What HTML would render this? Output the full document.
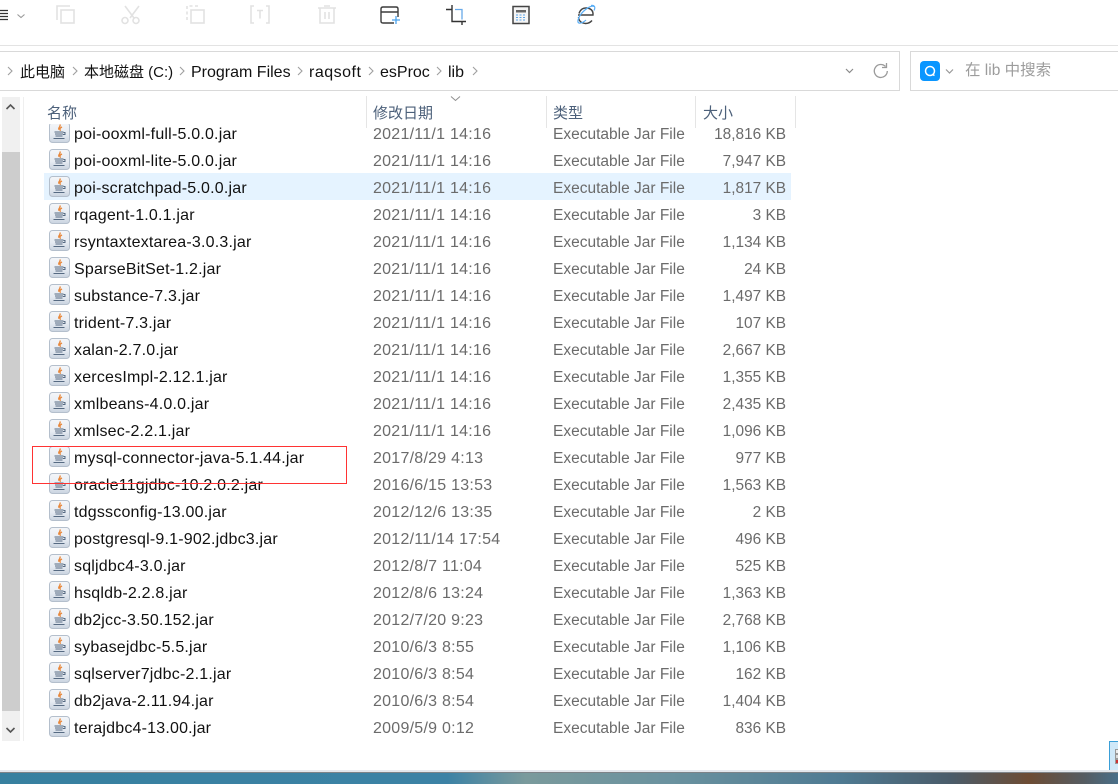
<!DOCTYPE html>
<html lang="zh"><head><meta charset="utf-8"><title>lib</title>
<style>
*{box-sizing:border-box}
html,body{margin:0;padding:0;background:#fff}
body{width:1118px;height:784px;position:relative;overflow:hidden;font-family:"Liberation Sans","Noto Sans CJK SC",sans-serif}
.a{position:absolute}
.t{position:absolute;white-space:nowrap;line-height:20px}
#rows{position:absolute;left:0;top:119px;width:800px}
.r{position:relative;height:27px;width:800px}
.r svg{position:absolute;left:49px;top:3px;width:21px;height:21px}
.r span{position:absolute;top:5px;line-height:21px;white-space:nowrap}
.n{left:74px;font-size:16px;letter-spacing:.2px;color:#111}
.d{left:373px;font-size:16px;letter-spacing:.25px;color:#6b6b6b}
.y{left:553px;font-size:15.5px;color:#6b6b6b}
.s{right:14px;font-size:15.4px;color:#6b6b6b}
.h{left:44px;width:747px;background:#e5f3ff;position:absolute;top:0;height:27px}
.sep{position:absolute;top:96px;height:32px;width:1px;background:#e5e5e5}
.hd{position:absolute;top:104px;font-size:15px;line-height:20px;color:#4c607a;white-space:nowrap}
.bc{position:absolute;top:63px;font-size:16px;line-height:20px;color:#111;white-space:nowrap}
.ch{position:absolute;top:66px;width:6px;height:10px}
</style></head><body>
<svg width="0" height="0" style="position:absolute"><defs>
<linearGradient id="g" x1="0" y1="0" x2="0" y2="1"><stop offset="0" stop-color="#f4f6f9"/><stop offset=".6" stop-color="#e6ebf2"/><stop offset="1" stop-color="#c9d3df"/></linearGradient>
<symbol id="j" viewBox="0 0 21 21">
<rect x=".5" y=".5" width="20" height="20" rx="3" fill="url(#g)" stroke="#b4bfcc"/>
<path d="M10.800 2.500c1.600 2-2.200 3-.8 5.200M13 5c-2 1-2.800 2-1.400 3.700" fill="none" stroke="#e8873a" stroke-width="1.300"/>
<path d="M5.500 10h9M6 12h8M6.500 14h7" stroke="#566a82" stroke-width="1.100" fill="none"/>
<path d="M14.500 10.500h1.500v2h-2M4.500 16.500h11" stroke="#566a82" stroke-width="1" fill="none"/>
</symbol></defs></svg>

<!-- toolbar -->
<svg class="a" style="left:0;top:0" width="620" height="44" fill="none">
<path d="M0 10.500h8M0 13.500h8M0 16.500h8M0 19.500h8" stroke="#333" stroke-width="1.200"/>
<path d="M17.500 14.500l3.500 3 3.500-3" stroke="#999" stroke-width="1.100"/>
<g stroke="#e2e2e2" stroke-width="1.600">
<path d="M57 20V6h13"/><rect x="61" y="10" width="13" height="13"/>
<path d="M125 6l9 12M139 6l-9 12"/><circle cx="125" cy="20.500" r="3"/><circle cx="136" cy="20.500" r="3"/>
<path d="M187 20V6h13" stroke-dasharray="3 2.500"/><rect x="191" y="10" width="13" height="13"/>
<path d="M254 6h-3v17h3M266 6h3v17h-3M257 10.500h6M260 10.500v8"/>
<path d="M318 8h18M324 6h6M320 8v15h14V8M325 12v7M329 12v7"/>
</g>
<path d="M394 23h-11q-2 0-2-2V9q0-2 2-2h13q2 0 2 2v8M381 12h17" stroke="#3c3c3c" stroke-width="1.400"/>
<path d="M392 20h8M396 16v8" stroke="#4ba3ee" stroke-width="1.300"/>
<path d="M446 9.500h6M452 5V21.500h14M462 25v-3.500" stroke="#333" stroke-width="1.400"/>
<path d="M455 9.500h7v10" stroke="#67a9e8" stroke-width="1.300"/>
<rect x="513" y="6.500" width="16" height="17" fill="#f5f5f5" stroke="#444" stroke-width="1.500"/>
<rect x="516" y="10" width="10" height="2.500" fill="#666"/>
<path d="M516 15h10M516 17.500h10M516 20h10" stroke="#5aa4e6" stroke-width="1.100" stroke-dasharray="2 1.500"/>
<path d="M578 15h15q.5-6-6-7-6-.5-8 5.500M578.500 17q.5 6 7 6.500 4 0 6.500-3" stroke="#444" stroke-width="1.400"/>
<path d="M594 6.500c-3-1.500-10 3-14 9-2 3-3 7-1 7.500 2 .5 5-1 7-3M591 5.500c3-.5 5 1 3 5" stroke="#59aef6" stroke-width="1.200"/>
</svg>

<div class="a" style="left:0;top:45px;width:1118px;height:1px;background:#e3e3e3"></div>

<!-- address bar -->
<div class="a" style="left:-2px;top:51px;width:902px;height:40px;border:1px solid #d9d9d9;background:#fff"></div>
<div class="a" style="left:910px;top:51px;width:212px;height:40px;border:1px solid #d9d9d9;background:#fff"></div>

<svg class="ch" style="left:7px" viewBox="0 0 6 10" fill="none"><path d="M1 1l4 4-4 4" stroke="#a0a0a0" stroke-width="1.100"/></svg>
<div class="bc" style="left:20px;font-size:15px">此电脑</div>
<svg class="ch" style="left:72px" viewBox="0 0 6 10" fill="none"><path d="M1 1l4 4-4 4" stroke="#a0a0a0" stroke-width="1.100"/></svg>
<div class="bc" style="left:84px;font-size:15px">本地磁盘 (C:)</div>
<svg class="ch" style="left:179px" viewBox="0 0 6 10" fill="none"><path d="M1 1l4 4-4 4" stroke="#a0a0a0" stroke-width="1.100"/></svg>
<div class="bc" style="left:191px">Program Files</div>
<svg class="ch" style="left:297px" viewBox="0 0 6 10" fill="none"><path d="M1 1l4 4-4 4" stroke="#a0a0a0" stroke-width="1.100"/></svg>
<div class="bc" style="left:309px;letter-spacing:.5px">raqsoft</div>
<svg class="ch" style="left:368px" viewBox="0 0 6 10" fill="none"><path d="M1 1l4 4-4 4" stroke="#a0a0a0" stroke-width="1.100"/></svg>
<div class="bc" style="left:380px">esProc</div>
<svg class="ch" style="left:436px" viewBox="0 0 6 10" fill="none"><path d="M1 1l4 4-4 4" stroke="#a0a0a0" stroke-width="1.100"/></svg>
<div class="bc" style="left:448px">lib</div>
<svg class="ch" style="left:472px" viewBox="0 0 6 10" fill="none"><path d="M1 1l4 4-4 4" stroke="#a0a0a0" stroke-width="1.100"/></svg>

<svg class="a" style="left:840px;top:60px" width="60" height="24" fill="none">
<path d="M6 9l3.500 3.500L13 9" stroke="#8a8a8a" stroke-width="1.200"/>
<path d="M45.500 6.500a6.500 6.500 0 1 0 1.800 4.500" stroke="#9a9a9a" stroke-width="1.300"/>
<path d="M46.500 3v4.500H42" stroke="#9a9a9a" stroke-width="1.300"/>
</svg>

<!-- search -->
<svg class="a" style="left:920px;top:61px" width="40" height="20" fill="none">
<rect width="20" height="20" rx="4" fill="#0a96ff"/>
<circle cx="10" cy="10" r="4.500" stroke="#fff" stroke-width="1.500"/><path d="M12.500 13.500l2 1" stroke="#fff" stroke-width="1.500"/>
<path d="M26 8.500l3.500 3.500L33 8.500" stroke="#999" stroke-width="1.200"/>
</svg>
<div class="t" style="left:965px;top:61px;font-size:15.500px;color:#9c9c9c">在 lib 中搜索</div>

<!-- scrollbar -->
<div class="a" style="left:2px;top:97px;width:18px;height:644px;background:#f0f0f0"></div>
<div class="a" style="left:2px;top:152px;width:18px;height:559px;background:#cdcdcd"></div>
<div class="a" style="left:23px;top:97px;width:1px;height:644px;background:#efefef"></div>
<svg class="a" style="left:2px;top:97px" width="18" height="644" fill="none">
<path d="M4.500 12l4-4 4 4" stroke="#555" stroke-width="1.600"/>
<path d="M4.500 631l4 4 4-4" stroke="#555" stroke-width="1.600"/>
</svg>

<!-- rows -->
<div id="rows">
<div class="r"><svg><use href="#j"/></svg><span class="n">poi-ooxml-full-5.0.0.jar</span><span class="d">2021/11/1 14:16</span><span class="y">Executable Jar File</span><span class="s">18,816 KB</span></div>
<div class="r"><svg><use href="#j"/></svg><span class="n">poi-ooxml-lite-5.0.0.jar</span><span class="d">2021/11/1 14:16</span><span class="y">Executable Jar File</span><span class="s">7,947 KB</span></div>
<div class="r"><div class="h"></div><svg><use href="#j"/></svg><span class="n">poi-scratchpad-5.0.0.jar</span><span class="d">2021/11/1 14:16</span><span class="y">Executable Jar File</span><span class="s">1,817 KB</span></div>
<div class="r"><svg><use href="#j"/></svg><span class="n">rqagent-1.0.1.jar</span><span class="d">2021/11/1 14:16</span><span class="y">Executable Jar File</span><span class="s">3 KB</span></div>
<div class="r"><svg><use href="#j"/></svg><span class="n">rsyntaxtextarea-3.0.3.jar</span><span class="d">2021/11/1 14:16</span><span class="y">Executable Jar File</span><span class="s">1,134 KB</span></div>
<div class="r"><svg><use href="#j"/></svg><span class="n">SparseBitSet-1.2.jar</span><span class="d">2021/11/1 14:16</span><span class="y">Executable Jar File</span><span class="s">24 KB</span></div>
<div class="r"><svg><use href="#j"/></svg><span class="n">substance-7.3.jar</span><span class="d">2021/11/1 14:16</span><span class="y">Executable Jar File</span><span class="s">1,497 KB</span></div>
<div class="r"><svg><use href="#j"/></svg><span class="n">trident-7.3.jar</span><span class="d">2021/11/1 14:16</span><span class="y">Executable Jar File</span><span class="s">107 KB</span></div>
<div class="r"><svg><use href="#j"/></svg><span class="n">xalan-2.7.0.jar</span><span class="d">2021/11/1 14:16</span><span class="y">Executable Jar File</span><span class="s">2,667 KB</span></div>
<div class="r"><svg><use href="#j"/></svg><span class="n">xercesImpl-2.12.1.jar</span><span class="d">2021/11/1 14:16</span><span class="y">Executable Jar File</span><span class="s">1,355 KB</span></div>
<div class="r"><svg><use href="#j"/></svg><span class="n">xmlbeans-4.0.0.jar</span><span class="d">2021/11/1 14:16</span><span class="y">Executable Jar File</span><span class="s">2,435 KB</span></div>
<div class="r"><svg><use href="#j"/></svg><span class="n">xmlsec-2.2.1.jar</span><span class="d">2021/11/1 14:16</span><span class="y">Executable Jar File</span><span class="s">1,096 KB</span></div>
<div class="r"><svg><use href="#j"/></svg><span class="n">mysql-connector-java-5.1.44.jar</span><span class="d">2017/8/29 4:13</span><span class="y">Executable Jar File</span><span class="s">977 KB</span></div>
<div class="r"><svg><use href="#j"/></svg><span class="n">oracle11gjdbc-10.2.0.2.jar</span><span class="d">2016/6/15 13:53</span><span class="y">Executable Jar File</span><span class="s">1,563 KB</span></div>
<div class="r"><svg><use href="#j"/></svg><span class="n">tdgssconfig-13.00.jar</span><span class="d">2012/12/6 13:35</span><span class="y">Executable Jar File</span><span class="s">2 KB</span></div>
<div class="r"><svg><use href="#j"/></svg><span class="n">postgresql-9.1-902.jdbc3.jar</span><span class="d">2012/11/14 17:54</span><span class="y">Executable Jar File</span><span class="s">496 KB</span></div>
<div class="r"><svg><use href="#j"/></svg><span class="n">sqljdbc4-3.0.jar</span><span class="d">2012/8/7 11:04</span><span class="y">Executable Jar File</span><span class="s">525 KB</span></div>
<div class="r"><svg><use href="#j"/></svg><span class="n">hsqldb-2.2.8.jar</span><span class="d">2012/8/6 13:24</span><span class="y">Executable Jar File</span><span class="s">1,363 KB</span></div>
<div class="r"><svg><use href="#j"/></svg><span class="n">db2jcc-3.50.152.jar</span><span class="d">2012/7/20 9:23</span><span class="y">Executable Jar File</span><span class="s">2,768 KB</span></div>
<div class="r"><svg><use href="#j"/></svg><span class="n">sybasejdbc-5.5.jar</span><span class="d">2010/6/3 8:55</span><span class="y">Executable Jar File</span><span class="s">1,106 KB</span></div>
<div class="r"><svg><use href="#j"/></svg><span class="n">sqlserver7jdbc-2.1.jar</span><span class="d">2010/6/3 8:54</span><span class="y">Executable Jar File</span><span class="s">162 KB</span></div>
<div class="r"><svg><use href="#j"/></svg><span class="n">db2java-2.11.94.jar</span><span class="d">2010/6/3 8:54</span><span class="y">Executable Jar File</span><span class="s">1,404 KB</span></div>
<div class="r"><svg><use href="#j"/></svg><span class="n">terajdbc4-13.00.jar</span><span class="d">2009/5/9 0:12</span><span class="y">Executable Jar File</span><span class="s">836 KB</span></div>
</div>

<!-- column header -->
<div class="a" style="left:24px;top:92px;width:780px;height:32px;background:#fff"></div>
<div class="sep" style="left:366px"></div>
<div class="sep" style="left:546px"></div>
<div class="sep" style="left:695px"></div>
<div class="sep" style="left:795px"></div>
<div class="hd" style="left:47px">名称</div>
<div class="hd" style="left:373px">修改日期</div>
<div class="hd" style="left:553px">类型</div>
<div class="hd" style="left:703px">大小</div>
<svg class="a" style="left:450px;top:95px" width="12" height="8" fill="none"><path d="M1 1.500l4.500 4 4.500-4" stroke="#8f8f8f" stroke-width="1"/></svg>

<!-- red box -->
<div class="a" style="left:32px;top:446px;width:315px;height:38px;border:1px solid #f33"></div>

<!-- bottom right widget -->
<div class="a" style="left:1109px;top:741px;width:12px;height:30px;background:#cfe8f8;border:1px solid #3a9fd8"></div>
<div class="a" style="left:1115px;top:749px;width:4px;height:5px;background:#eee;border:1px solid #999"></div>
<div class="a" style="left:1115px;top:754px;width:4px;height:5px;background:#ddd;border:1px solid #999"></div>
<div class="a" style="left:1115px;top:759px;width:4px;height:5px;background:#c33;border:1px solid #999"></div>

<!-- desktop strip -->
<div class="a" style="left:0;top:770px;width:1118px;height:2px;background:#e3e7ec"></div>
<div class="a" style="left:0;top:772px;width:1118px;height:1px;background:#7d8388"></div>
<div class="a" style="left:0;top:773px;width:1118px;height:11px;background:linear-gradient(90deg,#37809f 0%,#3c82a5 40%,#7a9a9c 47%,#6a929f 60%,#4f7b93 75%,#4a5c6a 85%,#6d4c34 92%,#555c62 97%,#4a6f88 100%)"></div>
</body></html>
